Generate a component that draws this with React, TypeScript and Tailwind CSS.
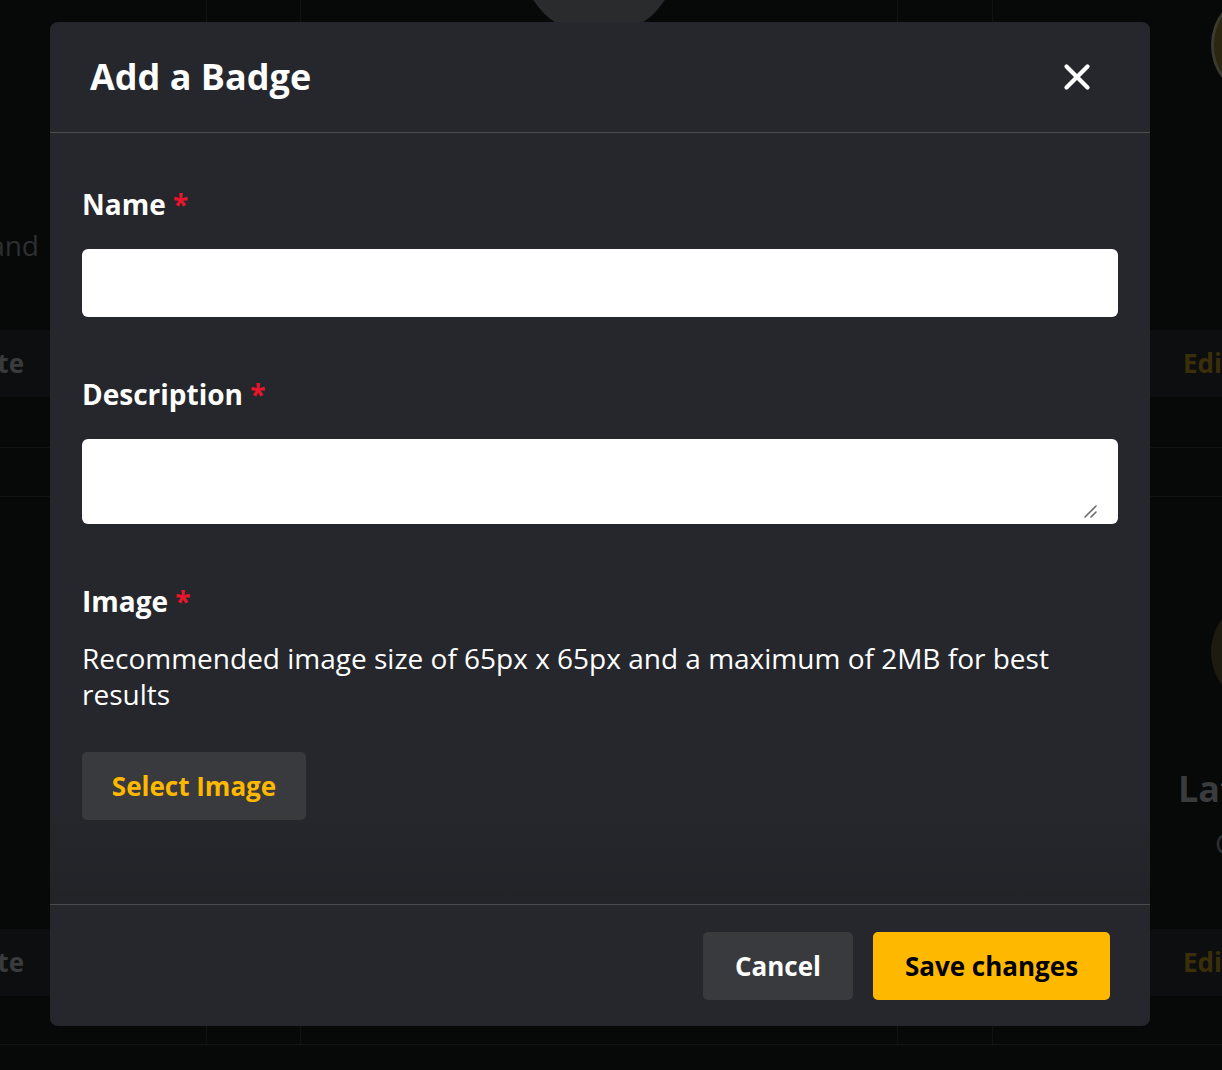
import { X } from "lucide-react";

function BackgroundPage() {
  return (
    <div className="absolute inset-0 overflow-hidden bg-[#070808] font-['Open_Sans',sans-serif]">
      <div className="flex h-[1045px] border-b border-[#141516]">
        {/* left column */}
        <div className="w-[207px] shrink-0 flex flex-col border-r border-[#101112]">
          <div className="h-[330px] relative">
            <span className="absolute right-[167px] top-[224px] text-[28px] text-[#2e2f31]">and</span>
          </div>
          <div className="h-[67px] bg-[#0d0e0f] relative">
            <span className="absolute right-[182px] top-[14px] text-[26px] font-bold text-[#3a3b3d]">te</span>
          </div>
          <div className="h-[50px]" />
          <div className="h-[50px] border-y border-[#111213]" />
          <div className="flex-1" />
          <div className="h-[67px] mb-[48px] bg-[#0d0e0f] relative">
            <span className="absolute right-[182px] top-[14px] text-[26px] font-bold text-[#3a3b3d]">te</span>
          </div>
        </div>
        <div className="w-[93px] shrink-0" />
        {/* middle column */}
        <div className="w-[598px] shrink-0 border-x border-[#101112] flex justify-center">
          <div className="w-[156px] h-[156px] -mt-[120px] rounded-full bg-[#2a2b2d]" />
        </div>
        <div className="w-[94px] shrink-0" />
        {/* right column */}
        <div className="flex-1 border-l border-[#101112] flex flex-col">
          <div className="h-[330px] relative">
            <div className="absolute left-[218px] -top-[10px] w-[110px] h-[110px] rounded-full border-[3px] border-[#3a3a30] bg-[#2a2610]" />
          </div>
          <div className="h-[67px] bg-[#0d0e0f] relative">
            <span className="absolute left-[190px] top-[14px] text-[26px] font-bold text-[#3b2f0a]">Edit</span>
          </div>
          <div className="h-[50px]" />
          <div className="h-[50px] border-y border-[#111213]" />
          <div className="flex-1 relative">
            <div className="absolute left-[218px] top-[100px] w-[110px] h-[110px] rounded-full bg-[#1d1b10]" />
            <span className="absolute left-[185px] top-[265px] text-[36px] font-bold text-[#3a3b3d]">Lat</span>
            <span className="absolute left-[222px] top-[325px] text-[28px] text-[#2e2f31]">C</span>
          </div>
          <div className="h-[67px] mb-[48px] bg-[#0d0e0f] relative">
            <span className="absolute left-[190px] top-[14px] text-[26px] font-bold text-[#3b2f0a]">Edit</span>
          </div>
        </div>
      </div>
    </div>
  );
}

function Label({ children }: { children: string }) {
  return (
    <label className="block text-[28px] leading-[38px] font-bold text-white">
      {children} <span className="text-[#e8162c]">*</span>
    </label>
  );
}

export default function App() {
  return (
    <div className="relative w-[1222px] h-[1070px] overflow-hidden font-['Open_Sans',sans-serif]">
      <BackgroundPage />

      <div className="absolute left-[50px] top-[22px] w-[1100px] h-[1004px] rounded-[8px] bg-[#25272c] flex flex-col">
        {/* header */}
        <div className="h-[111px] shrink-0 flex items-center justify-between pl-[40px] pr-[52px] border-b border-[#4a4b4e]">
          <h2 className="text-[36px] font-bold text-white leading-none">Add a Badge</h2>
          <X className="w-[42px] h-[42px] text-white" strokeWidth={2.4} />
        </div>

        {/* body */}
        <div className="flex-1 px-[32px] pt-[52px] bg-[linear-gradient(to_bottom,transparent_88%,rgba(0,0,0,0.1))]">
          <Label>Name</Label>
          <input className="mt-[26px] block w-full h-[68px] rounded-[6px] bg-white px-4 text-[22px] outline-none" />

          <div className="mt-[58px]">
            <Label>Description</Label>
          </div>
          <div className="relative mt-[26px]">
            <textarea className="block w-full h-[85px] rounded-[6px] bg-white px-4 py-3 text-[22px] outline-none resize-none" />
            <svg className="absolute right-[20px] bottom-[5px] w-[16px] h-[16px]" viewBox="0 0 16 16">
              <path d="M3 14 L14 3 M9 14 L14 9" stroke="#6b6b6b" strokeWidth="1.6" strokeLinecap="round" />
            </svg>
          </div>

          <div className="mt-[58px]">
            <Label>Image</Label>
          </div>
          <p className="mt-[20px] text-[28px] leading-[36px] text-white pr-[40px]">
            Recommended image size of 65px x 65px and a maximum of 2MB for best results
          </p>
          <button className="mt-[40px] h-[68px] w-[224px] rounded-[5px] bg-[#393a3e] text-[26px] font-bold text-[#ffb800]">
            Select Image
          </button>
        </div>

        {/* footer */}
        <div className="h-[122px] shrink-0 border-t border-[#4a4b4e] flex items-start justify-end gap-[20px] pt-[27px] pr-[40px]">
          <button className="h-[68px] w-[150px] rounded-[5px] bg-[#393a3e] text-[26px] font-bold text-white">
            Cancel
          </button>
          <button className="h-[68px] w-[237px] rounded-[5px] bg-[#ffb800] text-[26px] font-bold text-black">
            Save changes
          </button>
        </div>
      </div>
    </div>
  );
}
